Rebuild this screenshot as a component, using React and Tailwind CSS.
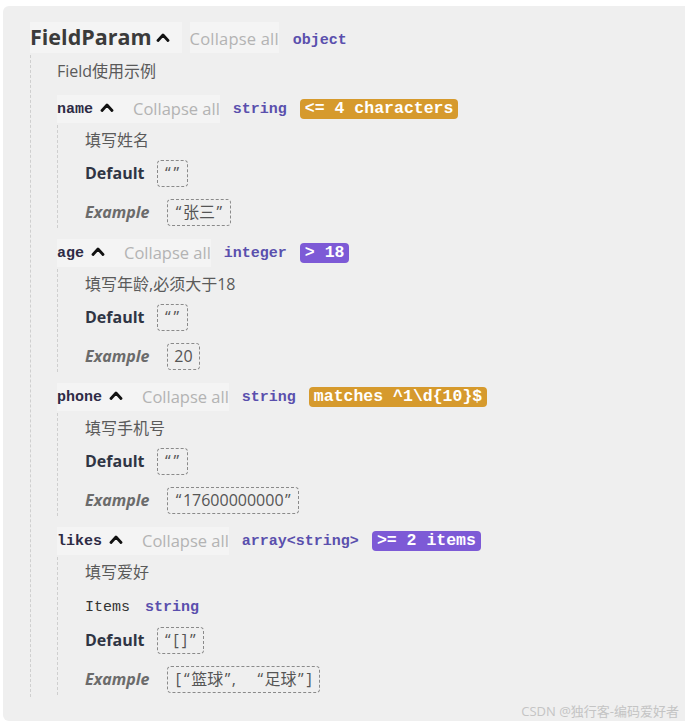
const sans = { fontFamily: '"Open Sans", "Noto Sans CJK SC", sans-serif' };

function Chevron({ className = '' }) {
    return (
        <svg width="14" height="10" viewBox="0 0 14 10" className={className}>
            <path d="M2 8.5 L7 3 L12 8.5" fill="none" stroke="#111" strokeWidth="2.8" strokeLinecap="round" strokeLinejoin="round" />
        </svg>
    );
}

function Badge({ children, color }) {
    return (
        <span
            className={`ml-[13px] inline-flex h-[20px] items-center rounded-[4px] px-[5px] font-['Liberation_Mono',monospace] text-[16.5px] font-bold leading-none text-white ${color}`}
        >
            {children}
        </span>
    );
}

function Head({ name, type, badge, badgeColor }) {
    return (
        <div className="flex h-[28px] items-center">
            <div className="flex h-full items-center bg-[#f4f4f4] pr-[19px]">
                <span className="translate-y-[1px] font-['Liberation_Mono',monospace] text-[15px] font-bold text-[#2e2b45]">{name}</span>
                <Chevron className="ml-[7px] -mt-[4px]" />
            </div>
            <span className="flex h-full items-center bg-[#f4f4f4] text-[16.5px] text-[#b3b3b3]" style={sans}>Collapse all</span>
            <span className="ml-[13px] translate-y-[1px] font-['Liberation_Mono',monospace] text-[15px] font-bold text-[#5a4fad]">{type}</span>
            {badge && <Badge color={badgeColor}>{badge}</Badge>}
        </div>
    );
}

// quotes get a little air, like the wider quote glyphs in the original
function spaced(text) {
    return text.split(/([“”\[\],])/).map((part, i) =>
        /[“”\[\]]/.test(part) ? (
            <span key={i} className="px-[1.5px]">{part}</span>
        ) : part === ',' ? (
            <span key={i} className="pr-[20px]">,</span>
        ) : (
            part
        )
    );
}

function ValueBox({ children, wide }) {
    return (
        <span className={`${wide ? 'ml-[18px]' : 'ml-[12px]'} inline-flex h-[27px] items-center rounded-[4px] border border-dashed border-[#8a8a8a] px-[6px] text-[16px] text-[#555]`}>
            {spaced(children)}
        </span>
    );
}

function Field({ name, type, badge, badgeColor, desc, items, def, example, first }) {
    return (
        <div className={first ? 'mt-[12px]' : 'mt-[11px]'}>
            <Head name={name} type={type} badge={badge} badgeColor={badgeColor} />
            <div className="mt-[2px] border-l border-dashed border-[#cfcfcf] pl-[27px] pt-[3px] pb-[2px]" style={sans}>
                <div className="flex h-[24px] items-center text-[16px] text-[#5a5a5a]">{desc}</div>
                {items && (
                    <div className="mt-[10px] flex h-[28px] items-center font-['Liberation_Mono',monospace] text-[15px]">
                        <span className="text-[#333]">Items</span>
                        <span className="ml-[15px] font-bold text-[#5a4fad]">{items}</span>
                    </div>
                )}
                <div className={`${items ? 'mt-[4px]' : 'mt-[7px]'} flex h-[28px] items-center`}>
                    <span className="text-[16px] font-bold text-[#2f3544]">Default</span>
                    <ValueBox>{def}</ValueBox>
                </div>
                <div className="mt-[11px] flex h-[28px] items-center">
                    <span className="text-[16px] font-bold italic text-[#6b6b6b]">Example</span>
                    <ValueBox wide>{example}</ValueBox>
                </div>
            </div>
        </div>
    );
}

export default function App() {
    return (
        <div className="min-h-[725px] bg-white pt-[6px] pl-[3px]">
            <div className="rounded-l-[6px] bg-[#efefef] pt-[16px] pl-[27px]" style={sans}>
                {/* root object header */}
                <div className="flex h-[31px] items-center">
                    <div className="flex h-full items-center bg-[#f4f4f4] pr-[12px]">
                        <span className="text-[21.5px] font-bold text-[#3b3b3b]">FieldParam</span>
                        <Chevron className="ml-[4px] -mt-[2px]" />
                    </div>
                    <span className="ml-[8px] flex h-full items-center bg-[#f4f4f4] pt-[3px] text-[16.5px] tracking-[0.2px] text-[#b3b3b3]">Collapse all</span>
                    <span className="ml-[14px] translate-y-[4px] font-['Liberation_Mono',monospace] text-[15px] font-bold text-[#5a4fad]">object</span>
                </div>

                <div className="mt-[2px] border-l border-dashed border-[#cfcfcf] pl-[26px] pt-[4px] pb-[2px]">
                    <div className="flex h-[24px] items-center text-[16px] text-[#5a5a5a]">Field使用示例</div>

                    <Field
                        first
                        name="name"
                        type="string"
                        badge="<= 4 characters"
                        badgeColor="bg-[#d69a2d]"
                        desc="填写姓名"
                        def="“”"
                        example="“张三”"
                    />
                    <Field
                        name="age"
                        type="integer"
                        badge="> 18"
                        badgeColor="bg-[#7d5ad6]"
                        desc="填写年龄,必须大于18"
                        def="“”"
                        example="20"
                    />
                    <Field
                        name="phone"
                        type="string"
                        badge="matches ^1\d{10}$"
                        badgeColor="bg-[#d69a2d]"
                        desc="填写手机号"
                        def="“”"
                        example="“17600000000”"
                    />
                    <Field
                        name="likes"
                        type="array<string>"
                        badge=">= 2 items"
                        badgeColor="bg-[#7d5ad6]"
                        desc="填写爱好"
                        items="string"
                        def="“[]”"
                        example="[“篮球”,“足球”]"
                    />
                </div>

                <div className="mt-[6px] flex h-[18px] items-center justify-end pr-[6px] text-[13px] text-[#c4c4c4]">
                    CSDN @独行客-编码爱好者
                </div>
            </div>
        </div>
    );
}
